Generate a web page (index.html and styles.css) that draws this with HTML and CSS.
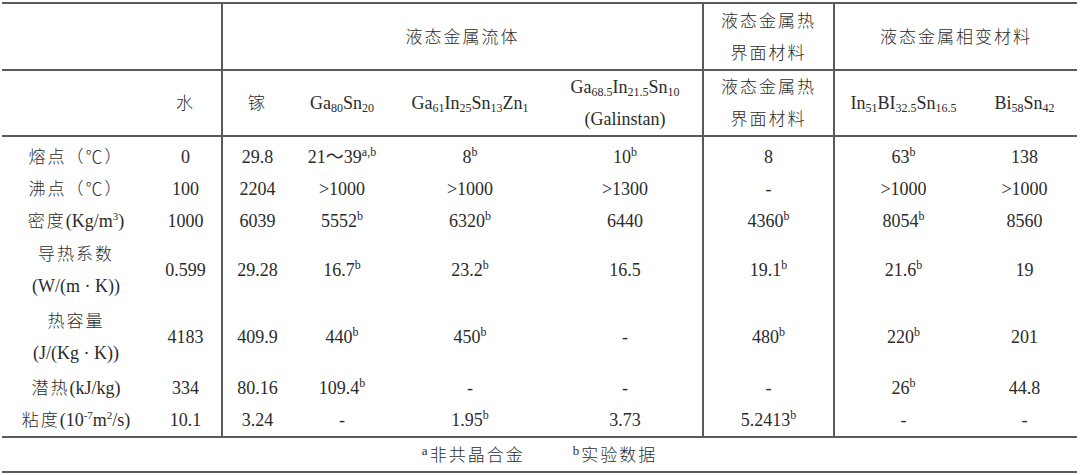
FILE: index.html
```html
<!DOCTYPE html>
<html lang="zh-CN">
<head>
<meta charset="utf-8">
<title>液态金属材料物性对比</title>
<link rel="stylesheet" href="styles.css">
</head>
<body>
<table class="tbl">
  <colgroup>
    <col class="c0"><col class="c1"><col class="c2"><col class="c3"><col class="c4">
    <col class="c5"><col class="c6"><col class="c7"><col class="c8">
  </colgroup>
  <thead>
    <tr class="h1">
      <th colspan="2"></th>
      <th colspan="4" class="vl"><span class="cn">液态金属流体</span></th>
      <th class="vl"><span class="cn">液态金属热<br>界面材料</span></th>
      <th colspan="2" class="vl"><span class="cn">液态金属相变材料</span></th>
    </tr>
    <tr class="h2">
      <th></th>
      <th><span class="cn">水</span></th>
      <th class="vl"><span class="cn">镓</span></th>
      <th>Ga<sub>80</sub>Sn<sub>20</sub></th>
      <th>Ga<sub>61</sub>In<sub>25</sub>Sn<sub>13</sub>Zn<sub>1</sub></th>
      <th>Ga<sub>68.5</sub>In<sub>21.5</sub>Sn<sub>10</sub><br>(Galinstan)</th>
      <th class="vl"><span class="cn">液态金属热<br>界面材料</span></th>
      <th class="vl">In<sub>51</sub>BI<sub>32.5</sub>Sn<sub>16.5</sub></th>
      <th>Bi<sub>58</sub>Sn<sub>42</sub></th>
    </tr>
  </thead>
  <tbody>
    <tr class="r1">
      <td><span class="cn">熔点（℃）</span></td><td>0</td>
      <td class="vl">29.8</td><td>21～39<sup>a,b</sup></td><td>8<sup>b</sup></td><td>10<sup>b</sup></td>
      <td class="vl">8</td><td class="vl">63<sup>b</sup></td><td>138</td>
    </tr>
    <tr class="r">
      <td><span class="cn">沸点（℃）</span></td><td>100</td>
      <td class="vl">2204</td><td>&gt;1000</td><td>&gt;1000</td><td>&gt;1300</td>
      <td class="vl">-</td><td class="vl">&gt;1000</td><td>&gt;1000</td>
    </tr>
    <tr class="r">
      <td><span class="cn">密度</span>(Kg/m<sup class="u">3</sup>)</td><td>1000</td>
      <td class="vl">6039</td><td>5552<sup>b</sup></td><td>6320<sup>b</sup></td><td>6440</td>
      <td class="vl">4360<sup>b</sup></td><td class="vl">8054<sup>b</sup></td><td>8560</td>
    </tr>
    <tr class="r2">
      <td><span class="cn">导热系数</span><br>(W/(m · K))</td><td>0.599</td>
      <td class="vl">29.28</td><td>16.7<sup>b</sup></td><td>23.2<sup>b</sup></td><td>16.5</td>
      <td class="vl">19.1<sup>b</sup></td><td class="vl">21.6<sup>b</sup></td><td>19</td>
    </tr>
    <tr class="r3">
      <td><span class="cn">热容量</span><br>(J/(Kg · K))</td><td>4183</td>
      <td class="vl">409.9</td><td>440<sup>b</sup></td><td>450<sup>b</sup></td><td>-</td>
      <td class="vl">480<sup>b</sup></td><td class="vl">220<sup>b</sup></td><td>201</td>
    </tr>
    <tr class="r4">
      <td><span class="cn">潜热</span>(kJ/kg)</td><td>334</td>
      <td class="vl">80.16</td><td>109.4<sup>b</sup></td><td>-</td><td>-</td>
      <td class="vl">-</td><td class="vl">26<sup>b</sup></td><td>44.8</td>
    </tr>
    <tr class="r last">
      <td><span class="cn">粘度</span>(10<sup class="u">-7</sup>m<sup class="u">2</sup>/s)</td><td>10.1</td>
      <td class="vl">3.24</td><td>-</td><td>1.95<sup>b</sup></td><td>3.73</td>
      <td class="vl">5.2413<sup>b</sup></td><td class="vl">-</td><td>-</td>
    </tr>
  </tbody>
  <tfoot>
    <tr class="foot">
      <td colspan="9"><span class="note"><sup class="fn">a</sup><span class="cn">非共晶合金</span></span><span class="note"><sup class="fn">b</sup><span class="cn">实验数据</span></span></td>
    </tr>
  </tfoot>
</table>
</body>
</html>
```

FILE: styles.css
```css
html, body {
  margin: 0;
  padding: 0;
  background: #ffffff;
}

body {
  padding: 2px 0 0 2px;
  font-family: "Liberation Serif", "Noto Sans CJK SC", serif;
  font-size: 18px;
  color: #2b2b2b;
}

.tbl {
  width: 1075px;
  border-collapse: collapse;
  table-layout: fixed;
  border-top: 2px solid #5a5a5a;
}

.c0 { width: 148px; }
.c1 { width: 72px; }
.c2 { width: 70px; }
.c3 { width: 100px; }
.c4 { width: 156px; }
.c5 { width: 155px; }
.c6 { width: 131px; }
.c7 { width: 138px; }
.c8 { width: 105px; }

th, td {
  padding: 0;
  text-align: center;
  vertical-align: middle;
  font-weight: normal;
  line-height: 32px;
  white-space: nowrap;
}

.vl {
  border-left: 2px solid #5a5a5a;
}

.cn {
  font-family: "Noto Sans CJK SC", sans-serif;
  font-size: 17px;
  font-weight: 300;
  line-height: 20px;
  letter-spacing: 2px;
  color: #2b2b2b;
}

.h1 { height: 67px; }
.h2 { height: 66px; }
.h1 th, .h2 th {
  border-bottom: 2px solid #5a5a5a;
}

.r1 { height: 36px; }
.r1 td { padding-top: 4px; }
.r { height: 32px; }
.r2 { height: 66px; }
.r3 { height: 68px; }
.r4 { height: 33px; }
.last td { border-bottom: 2px solid #5a5a5a; }

sub {
  font-size: 12px;
  vertical-align: -3px;
  line-height: 0;
}

sup {
  font-size: 12px;
  vertical-align: 7px;
  line-height: 0;
}

sup.u {
  font-size: 11px;
  vertical-align: 7px;
}

.foot { height: 35px; }
.foot td {
  border-bottom: 2px solid #5a5a5a;
}

.note {
  display: inline-block;
  margin: 0 24px;
}

.fn {
  font-size: 13px;
  vertical-align: 6px;
  margin-right: 2px;
}
```
